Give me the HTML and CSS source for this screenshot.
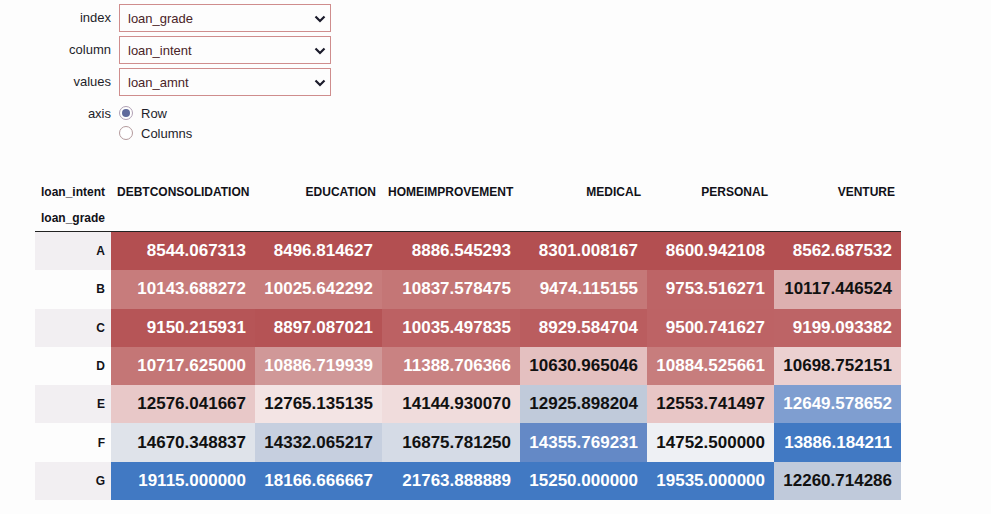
FILE: index.html
```html
<!DOCTYPE html>
<html>
<head>
<meta charset="utf-8">
<link rel="stylesheet" href="styles.css">
</head>
<body>
<div class="widgets">
  <div class="wrow">
    <label class="wlabel">index</label>
    <div class="select"><span>loan_grade</span><svg class="chev" width="12" height="8" viewBox="0 0 12 8"><polyline points="1.5,1.5 6,6 10.5,1.5" fill="none" stroke="#1b1b2b" stroke-width="2.2"/></svg></div>
  </div>
  <div class="wrow">
    <label class="wlabel">column</label>
    <div class="select"><span>loan_intent</span><svg class="chev" width="12" height="8" viewBox="0 0 12 8"><polyline points="1.5,1.5 6,6 10.5,1.5" fill="none" stroke="#1b1b2b" stroke-width="2.2"/></svg></div>
  </div>
  <div class="wrow">
    <label class="wlabel">values</label>
    <div class="select"><span>loan_amnt</span><svg class="chev" width="12" height="8" viewBox="0 0 12 8"><polyline points="1.5,1.5 6,6 10.5,1.5" fill="none" stroke="#1b1b2b" stroke-width="2.2"/></svg></div>
  </div>
  <div class="wrow axis">
    <label class="wlabel small">axis</label>
    <div class="radios">
      <div class="ritem"><span class="radio on"></span><span>Row</span></div>
      <div class="ritem"><span class="radio"></span><span>Columns</span></div>
    </div>
  </div>
</div>

<table class="pivot">
  <colgroup>
    <col class="c-idx"><col class="c1"><col class="c2"><col class="c3"><col class="c4"><col class="c5"><col class="c6">
  </colgroup>
  <thead>
    <tr class="hrow">
      <th class="iname">loan_intent</th>
      <th class="left">DEBTCONSOLIDATION</th>
      <th>EDUCATION</th>
      <th class="left">HOMEIMPROVEMENT</th>
      <th>MEDICAL</th>
      <th>PERSONAL</th>
      <th>VENTURE</th>
    </tr>
    <tr class="hrow last">
      <th class="iname">loan_grade</th>
      <th></th><th></th><th></th><th></th><th></th><th></th>
    </tr>
  </thead>
  <tbody>
    <tr class="odd">
      <th>A</th>
      <td class="lt" style="background:#b34f51">8544.067313</td>
      <td class="lt" style="background:#b34f51">8496.814627</td>
      <td class="lt" style="background:#b34f51">8886.545293</td>
      <td class="lt" style="background:#b34f51">8301.008167</td>
      <td class="lt" style="background:#b34f51">8600.942108</td>
      <td class="lt" style="background:#b34f51">8562.687532</td>
    </tr>
    <tr>
      <th>B</th>
      <td class="lt" style="background:#c77c7c">10143.688272</td>
      <td class="lt" style="background:#c77c7c">10025.642292</td>
      <td class="lt" style="background:#c47676">10837.578475</td>
      <td class="lt" style="background:#c57878">9474.115155</td>
      <td class="lt" style="background:#bd6466">9753.516271</td>
      <td style="background:#ddb0b0">10117.446524</td>
    </tr>
    <tr class="odd">
      <th>C</th>
      <td class="lt" style="background:#b65557">9150.215931</td>
      <td class="lt" style="background:#b55355">8897.087021</td>
      <td class="lt" style="background:#bc6163">10035.497835</td>
      <td class="lt" style="background:#ba5d5f">8929.584704</td>
      <td class="lt" style="background:#bd6365">9500.741627</td>
      <td class="lt" style="background:#bd6466">9199.093382</td>
    </tr>
    <tr>
      <th>D</th>
      <td class="lt" style="background:#c47676">10717.625000</td>
      <td class="lt" style="background:#d09898">10886.719939</td>
      <td class="lt" style="background:#c98282">11388.706366</td>
      <td style="background:#e4c0c0">10630.965046</td>
      <td class="lt" style="background:#c77d7d">10884.525661</td>
      <td style="background:#ebd0d0">10698.752151</td>
    </tr>
    <tr class="odd">
      <th>E</th>
      <td style="background:#e8c8c8">12576.041667</td>
      <td style="background:#f3e4e4">12765.135135</td>
      <td style="background:#f0dcdc">14144.930070</td>
      <td style="background:#c0cada">12925.898204</td>
      <td style="background:#e8c6c6">12553.741497</td>
      <td class="lt" style="background:#7f9ed0">12649.578652</td>
    </tr>
    <tr>
      <th>F</th>
      <td style="background:#dfe3ea">14670.348837</td>
      <td style="background:#c6cfdf">14332.065217</td>
      <td style="background:#d5dbe6">16875.781250</td>
      <td class="lt" style="background:#6489c6">14355.769231</td>
      <td style="background:#eef0f4">14752.500000</td>
      <td class="lt" style="background:#4179c3">13886.184211</td>
    </tr>
    <tr class="odd">
      <th>G</th>
      <td class="lt" style="background:#4179c3">19115.000000</td>
      <td class="lt" style="background:#4179c3">18166.666667</td>
      <td class="lt" style="background:#4179c3">21763.888889</td>
      <td class="lt" style="background:#4179c3">15250.000000</td>
      <td class="lt" style="background:#4179c3">19535.000000</td>
      <td style="background:#c0cadb">12260.714286</td>
    </tr>
  </tbody>
</table>
</body>
</html>
```

FILE: styles.css
```css
html, body {
  margin: 0;
  padding: 0;
  background: #fdfdfd;
  font-family: "Liberation Sans", Arial, sans-serif;
}

.widgets {
  display: flex;
  flex-direction: column;
  gap: 4px;
  padding-top: 4px;
}

.wrow {
  display: flex;
  align-items: flex-start;
}

.wlabel {
  width: 111px;
  margin-right: 8px;
  text-align: right;
  font-size: 13px;
  line-height: 28px;
  color: #1e1e2a;
}

.wlabel.small {
  line-height: 21px;
}

.select {
  height: 26px;
  border: 1px solid #cf8d8d;
  display: flex;
  align-items: center;
  justify-content: space-between;
  padding: 0 4px 0 8px;
  box-sizing: content-box;
  width: 198px;
  font-size: 13px;
  color: #4a2427;
}

.chev {
  margin-top: 1px;
}

.axis {
  padding-top: 3px;
}

.radios {
  display: flex;
  flex-direction: column;
}

.ritem {
  display: flex;
  align-items: center;
  height: 20px;
  font-size: 13px;
  color: #1e1e2a;
  gap: 8px;
}

.radio {
  width: 12px;
  height: 12px;
  border: 1px solid #b39a9c;
  border-radius: 50%;
  box-sizing: content-box;
  position: relative;
  background: #fff;
}

.radio.on {
  border-color: #b0a0b4;
}

.radio.on::after {
  content: "";
  position: absolute;
  left: 2px;
  top: 2px;
  width: 8px;
  height: 8px;
  border-radius: 50%;
  background: #5f6a9c;
}

.pivot {
  margin: 36px 0 0 35px;
  border-collapse: collapse;
  table-layout: fixed;
  width: 866px;
  color: #000;
}

.c-idx { width: 76px; }
.c1 { width: 144px; }
.c2 { width: 127px; }
.c3 { width: 138px; }
.c4 { width: 127px; }
.c5 { width: 127px; }
.c6 { width: 127px; }

.hrow th {
  height: 26px;
  padding: 0 6px;
  font-size: 12px;
  font-weight: bold;
  text-align: right;
  white-space: nowrap;
  color: #111118;
  vertical-align: middle;
}

.hrow th.left,
.hrow th.iname {
  text-align: left;
}

.hrow.last th {
  border-bottom: 1px solid #222;
}

tbody th {
  font-size: 12px;
  font-weight: bold;
  text-align: right;
  padding: 0 6px;
  color: #111118;
  background: #fdfdfd;
}

tbody tr.odd th {
  background: #f2eff2;
}

tbody td {
  height: 38.3px;
  padding: 0 9px 0 0;
  font-size: 17px;
  font-weight: bold;
  text-align: right;
  white-space: nowrap;
  color: #111;
}

tbody td.lt {
  color: #fff;
}
```
